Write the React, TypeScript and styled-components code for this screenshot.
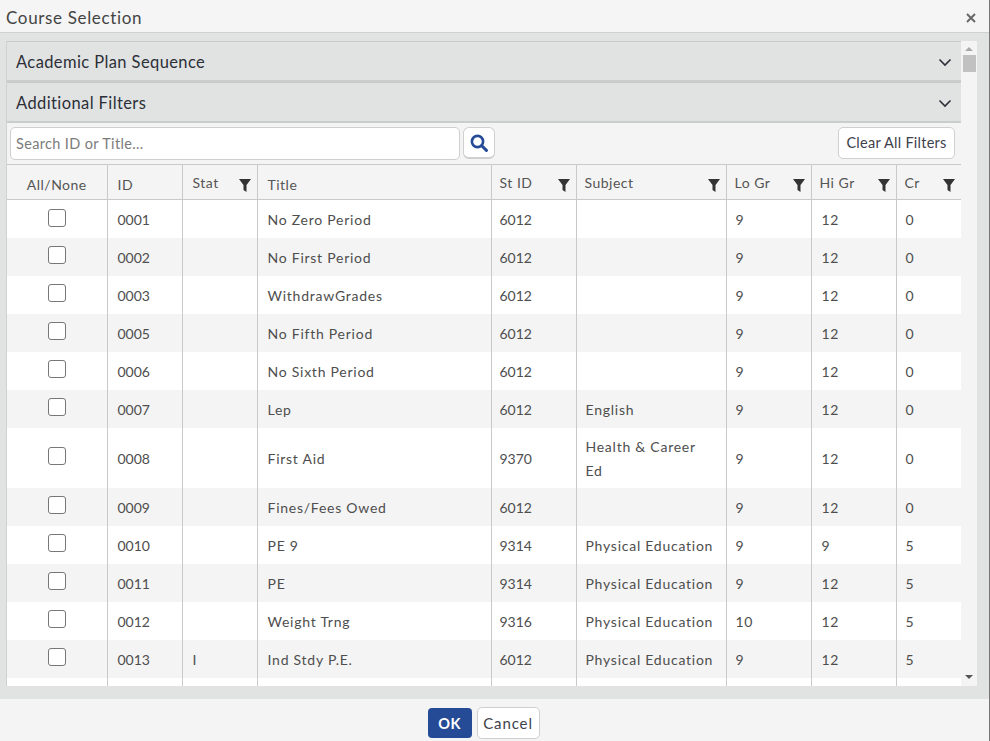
import React from "react";
import styled, { createGlobalStyle } from "styled-components";

const Global = createGlobalStyle`
  html, body { margin: 0; padding: 0; height: 100%; overflow: hidden; }
  body { font-family: Lato, "Open Sans", sans-serif; color: #4a4a4a; background: #f4f4f4; }
  * { box-sizing: border-box; }
`;

const Dialog = styled.div`
  width: 990px; height: 741px; display: flex; flex-direction: column;
  border-right: 1px solid #777;
`;
const TitleBar = styled.header`
  height: 33px; flex: none; display: flex; align-items: center; justify-content: space-between;
  padding: 3px 13px 0 6px; background: #f5f5f5; border-bottom: 1px solid #cfd1d0;
`;
const DialogTitle = styled.h1`
  margin: 0; font-size: 17px; font-weight: 400; letter-spacing: 0.65px; color: #444;
`;
const Close = styled.svg`width: 10px; height: 10px; display: block;`;
const Body = styled.main`
  height: 666px; flex: none; display: flex; padding: 8px 11px 12px 6px; background: #e1e3e2;
`;
const Content = styled.div`
  width: 955px; flex: none; height: 645px; overflow: hidden; display: flex; flex-direction: column;
  border-left: 1px solid #cfd1d0;
`;
const Accordion = styled.div`
  height: 41px; flex: none; display: flex; align-items: center; justify-content: space-between;
  padding: 2px 9px 0 9px; background: #e1e3e2; border-top: 1px solid #c8caca;
  border-bottom: 2px solid #cbcdcc; font-size: 16.5px; letter-spacing: 0.4px; color: #2c2f38;
`;
const Chevron = styled.svg`width: 14px; height: 9px; display: block;`;
const Toolbar = styled.div`
  height: 41px; flex: none; display: flex; align-items: flex-start; padding: 4px 6px 0 3px;
  background: #f4f4f4;
`;
const SearchInput = styled.div`
  width: 450px; height: 33px; padding-left: 5px; display: flex; align-items: center;
  background: #fff; border: 1px solid #cfcfcf; border-radius: 5px;
  font-size: 14.5px; letter-spacing: 0.35px; color: #7c7c7c;
`;
const SearchButton = styled.button`
  width: 32px; height: 32px; margin-left: 3px; padding: 0; display: flex; align-items: center; justify-content: center;
  background: #fff; border: 1px solid #cfcfcf; border-bottom-width: 2px; border-radius: 6px;
`;
const ClearButton = styled.button`
  width: 117px; height: 32px; margin-left: auto; padding: 0 0 2px; background: #fff;
  border: 1px solid #cfcfcf; border-radius: 5px; font: 400 14.5px Lato, sans-serif;
  letter-spacing: 0.25px; color: #3d414b;
`;
const Table = styled.table`
  width: 954px; table-layout: fixed; border-collapse: collapse; background: #fff;
`;
const HeadCell = styled.th<{ $center?: boolean; $filter?: boolean; $inset?: number }>`
  height: 35px; padding: ${p => (p.$center ? "4px 0 0" : p.$filter ? `1px 0 0 ${p.$inset}px` : `4px 0 0 ${p.$inset}px`)};
  background: #f4f4f4; border: 1px solid #c9c9c9; border-left: 0; position: relative;
  text-align: ${p => (p.$center ? "center" : "left")};
  font-size: 14px; font-weight: 400; letter-spacing: 0.5px; color: #555;
`;
const Funnel = styled.svg`
  position: absolute; right: 6px; top: 14px; width: 12px; height: 13px;
`;
const Row = styled.tr<{ $tall?: boolean; $alt?: boolean }>`
  height: ${p => (p.$tall ? 60 : 38)}px; background: ${p => (p.$alt ? "#f4f4f4" : "#fff")};
`;
const Cell = styled.td<{ $inset: number; $num?: boolean }>`
  padding: 2px 0 0 ${p => p.$inset}px; border-right: 1px solid #c9c9c9; font-size: 14px; line-height: 24px;
  letter-spacing: ${p => (p.$num ? 0 : 0.75)}px; color: #4e4e4e; white-space: pre-line;
`;
const CheckCell = styled.td`
  padding: 0 0 5px; text-align: center; border-right: 1px solid #c9c9c9;
`;
const Check = styled.span`
  display: inline-block; width: 18px; height: 18px; vertical-align: middle;
  border: 1px solid #777; border-radius: 3px; background: #fff;
`;
const Scrollbar = styled.div`
  width: 16px; height: 645px; flex: none; display: flex; flex-direction: column; align-items: center;
  background: #f4f4f4; padding-top: 6px;
`;
const Arrow = styled.div<{ $down?: boolean }>`
  width: 0; height: 0; border-left: 4px solid transparent; border-right: 4px solid transparent;
  ${p => p.$down ? "border-top: 4px solid #555; margin-top: auto; margin-bottom: 7px;" : "border-bottom: 4px solid #a8a8a8;"}
`;
const Thumb = styled.div`width: 13px; height: 17px; margin-top: 4px; background: #c1c1c1;`;
const Footer = styled.footer`
  flex: 1; display: flex; justify-content: center; gap: 5px; padding: 9px 22px 0 0; background: #f4f4f4;
`;
const Ok = styled.button`
  width: 44px; height: 30px; padding: 0; border: 0; border-radius: 4px; background: #254a96;
  color: #fff; font: 700 14.5px Lato, sans-serif; letter-spacing: .5px;
`;
const Cancel = styled.button`
  width: 63px; height: 32px; margin-top: -1px; padding: 0; background: #fff; border: 1px solid #cfcfcf; border-radius: 5px;
  color: #3d414b; font: 400 15px Lato, sans-serif; letter-spacing: .9px;
`;

const widths = [100, 75, 75, 234, 85, 150, 85, 85, 65];
const heads: { label: string; filter: boolean; inset: number }[] = [
  { label: "ID", filter: false, inset: 10 },
  { label: "Stat", filter: true, inset: 10 },
  { label: "Title", filter: false, inset: 10 },
  { label: "St ID", filter: true, inset: 8 },
  { label: "Subject", filter: true, inset: 8 },
  { label: "Lo Gr", filter: true, inset: 8 },
  { label: "Hi Gr", filter: true, inset: 8 },
  { label: "Cr", filter: true, inset: 8 },
];
const cellInsets = [10, 10, 10, 8, 9, 9, 10, 9];
const PE = "Physical Education";
const rows: string[][] = [
  ["0001", "", "No Zero Period", "6012", "", "9", "12", "0"],
  ["0002", "", "No First Period", "6012", "", "9", "12", "0"],
  ["0003", "", "WithdrawGrades", "6012", "", "9", "12", "0"],
  ["0005", "", "No Fifth Period", "6012", "", "9", "12", "0"],
  ["0006", "", "No Sixth Period", "6012", "", "9", "12", "0"],
  ["0007", "", "Lep", "6012", "English", "9", "12", "0"],
  ["0008", "", "First Aid", "9370", "Health & Career\nEd", "9", "12", "0"],
  ["0009", "", "Fines/Fees Owed", "6012", "", "9", "12", "0"],
  ["0010", "", "PE 9", "9314", PE, "9", "9", "5"],
  ["0011", "", "PE", "9314", PE, "9", "12", "5"],
  ["0012", "", "Weight Trng", "9316", PE, "10", "12", "5"],
  ["0013", "I", "Ind Stdy P.E.", "6012", PE, "9", "12", "5"],
  ["", "", "", "", "", "", "", ""],
];
const numeric = new Set([0, 3]);

const Down = () => (
  <Chevron viewBox="0 0 14 9"><path d="M1.5 1.5 7 7l5.5-5.5" fill="none" stroke="#2c2f38" strokeWidth="1.6" /></Chevron>
);

export default function App() {
  return (
    <Dialog>
      <Global />
      <TitleBar>
        <DialogTitle>Course Selection</DialogTitle>
        <Close viewBox="0 0 10 10"><path d="M1 1l8 8M9 1 1 9" stroke="#666" strokeWidth="1.9" /></Close>
      </TitleBar>
      <Body>
        <Content>
          <Accordion>Academic Plan Sequence<Down /></Accordion>
          <Accordion>Additional Filters<Down /></Accordion>
          <Toolbar>
            <SearchInput>Search ID or Title...</SearchInput>
            <SearchButton aria-label="Search">
              <svg width="18" height="18" viewBox="0 0 18 18"><circle cx="7.5" cy="7.5" r="5.6" fill="none" stroke="#254a96" strokeWidth="2.6" /><path d="m11.8 11.8 4.6 4.6" stroke="#254a96" strokeWidth="3" strokeLinecap="round" /></svg>
            </SearchButton>
            <ClearButton>Clear All Filters</ClearButton>
          </Toolbar>
          <Table>
            <colgroup>{widths.map((w, i) => <col key={i} style={{ width: w }} />)}</colgroup>
            <thead>
              <tr>
                <HeadCell $center>All/None</HeadCell>
                {heads.map(h => (
                  <HeadCell key={h.label} $filter={h.filter} $inset={h.inset}>
                    {h.label}
                    {h.filter && <Funnel viewBox="0 0 12 13"><path d="M0 0h12L7.5 6v7L4.5 11V6z" fill="#333" /></Funnel>}
                  </HeadCell>
                ))}
              </tr>
            </thead>
            <tbody>
              {rows.map((r, i) => (
                <Row key={i} $alt={i % 2 === 1} $tall={r[0] === "0008"}>
                  <CheckCell><Check /></CheckCell>
                  {r.map((c, j) => <Cell key={j} $inset={cellInsets[j]} $num={numeric.has(j)}>{c}</Cell>)}
                </Row>
              ))}
            </tbody>
          </Table>
        </Content>
        <Scrollbar><Arrow /><Thumb /><Arrow $down /></Scrollbar>
      </Body>
      <Footer><Ok>OK</Ok><Cancel>Cancel</Cancel></Footer>
    </Dialog>
  );
}
